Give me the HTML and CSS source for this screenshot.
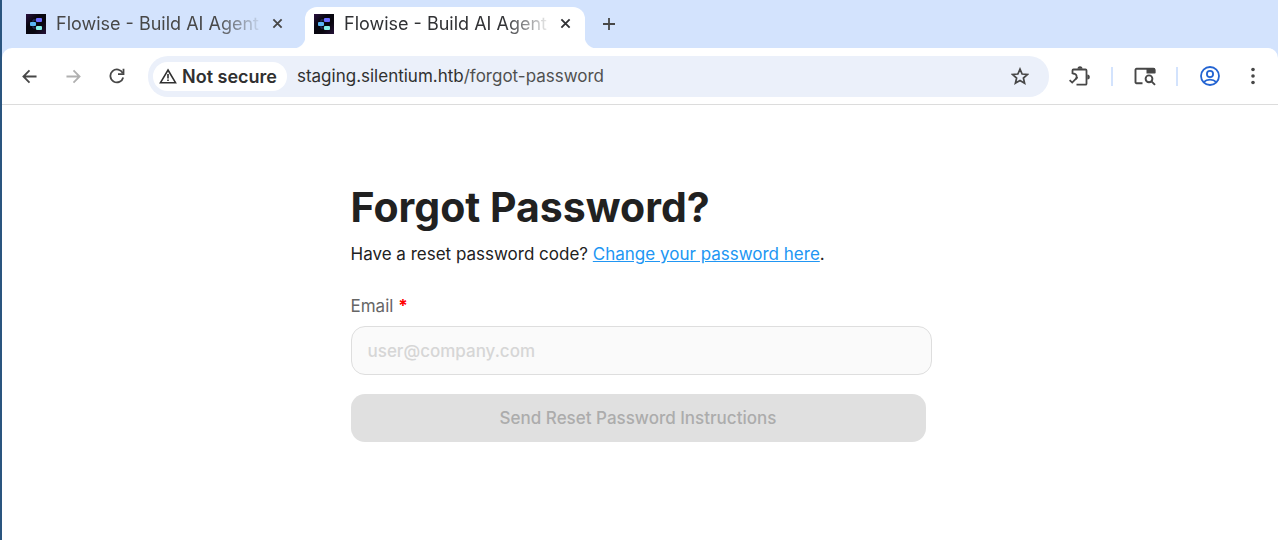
FILE: index.html
```html
<!DOCTYPE html>
<html lang="en">
<head>
<meta charset="utf-8">
<title>Flowise - Build AI Agents</title>
<link rel="stylesheet" href="styles.css">
</head>
<body>
<svg class="sprite" aria-hidden="true">
  <defs>
    <linearGradient id="logo-bg" x1="0" y1="0" x2="1" y2="1">
      <stop offset="0" stop-color="#2a1040"/>
      <stop offset=".35" stop-color="#07060f"/>
      <stop offset=".65" stop-color="#08060f"/>
      <stop offset="1" stop-color="#251238"/>
    </linearGradient>
  </defs>
  <symbol id="logo" viewBox="0 0 20 20">
    <rect width="20" height="20" fill="url(#logo-bg)"/>
    <path d="M7 10V6h5M7 10v4h5" fill="none" stroke="#27356b" stroke-width="1"/>
    <rect x="10" y="4" width="6" height="4" rx="1" fill="#6c6cff"/>
    <rect x="4" y="8" width="6" height="4" rx="1" fill="#5ab4f4"/>
    <rect x="10" y="12" width="6" height="4" rx="1" fill="#84eee8"/>
  </symbol>
  <symbol id="close" viewBox="0 0 12 12">
    <path d="M1.500 1.500l9 9M10.500 1.500l-9 9" fill="none" stroke="currentColor" stroke-width="2"/>
  </symbol>
</svg>
<div class="browser">
  <header>
    <nav class="tabs" aria-label="Tabs">
      <div class="tab">
        <svg class="logo"><use href="#logo"/></svg>
        <span class="tab-title">Flowise - Build AI Agents</span>
        <button class="tab-close" aria-label="Close tab"><svg><use href="#close"/></svg></button>
      </div>
      <div class="tab active">
        <svg class="logo"><use href="#logo"/></svg>
        <span class="tab-title">Flowise - Build AI Agents</span>
        <button class="tab-close" aria-label="Close tab"><svg><use href="#close"/></svg></button>
      </div>
      <button class="new-tab" aria-label="New tab"><svg width="14" height="14" viewBox="0 0 14 14" fill="none" stroke="currentColor" stroke-width="1.800"><path d="M7 1v12M1 7h12"/></svg></button>
    </nav>
    <div class="toolbar">
      <div class="nav-buttons">
        <button class="icon-button" aria-label="Back"><svg width="15" height="15" viewBox="0 0 16 16" fill="none" stroke="currentColor" stroke-width="1.900"><path d="M15.500 8H2M8 1.500L1.500 8 8 14.500"/></svg></button>
        <button class="icon-button" aria-label="Forward" disabled><svg width="15" height="15" viewBox="0 0 16 16" fill="none" stroke="currentColor" stroke-width="1.900"><path d="M.5 8H14M8 1.500L14.500 8 8 14.500"/></svg></button>
        <button class="icon-button" aria-label="Reload"><svg width="16" height="16" viewBox="0 0 16 16" fill="none" stroke="currentColor" stroke-width="1.800"><path d="M14.200 9.500A6.500 6.500 0 1 1 13.800 5.200"/><path d="M14.500.8v5.400H9"/></svg></button>
      </div>
      <div class="omnibox">
        <button class="chip"><svg width="18" height="16" viewBox="0 0 18 16" fill="none" stroke="currentColor" stroke-width="1.600"><path d="M9 2L16.500 14.700H1.500Z"/><path d="M9 6v4.500M9 11.500v1.600"/></svg>Not secure</button>
        <span class="url">staging.silentium.htb<span class="url-path">/forgot-password</span></span>
        <button class="icon-button star" aria-label="Bookmark this page"><svg width="18" height="18" viewBox="0 0 18 18" fill="none" stroke="currentColor" stroke-width="1.700"><path d="M9 2.100l2.100 4.900 5.300.5-4 3.500 1.200 5.200L9 13.400l-4.600 2.800L5.600 11l-4-3.500 5.300-.5z"/></svg></button>
      </div>
      <div class="actions">
        <button class="icon-button" aria-label="Extensions"><svg width="22" height="20" viewBox="0 0 22 20" fill="none" stroke="currentColor" stroke-width="1.800"><path d="M3.500 8V4.500a1 1 0 0 1 1-1h12a1 1 0 0 1 1 1v13.200a1 1 0 0 1-1 1H7.500M3.500 7.500C8 7.500 8.500 11 6.800 13.200"/><path d="M.6 14.100l2.600 2.500 5.300-5.500"/><path d="M8.500 2.800a2.500 2.500 0 0 1 5 0zM18.300 8.500a2.500 2.500 0 0 1 0 5z" fill="currentColor" stroke="none"/></svg></button>
        <span class="divider"></span>
        <button class="icon-button" aria-label="Search side panel"><svg width="22" height="20" viewBox="0 0 22 20" fill="none" stroke="currentColor" stroke-width="1.900"><path d="M8.500 17.200H2.500a1 1 0 0 1-1-1V3.800a1 1 0 0 1 1-1h17a1 1 0 0 1 1 1V7"/><path d="M12.500 2h7a1.800 1.800 0 0 1 1.800 1.800V7.500h-8.800z" fill="currentColor" stroke="none"/><circle cx="15" cy="12.800" r="3.400"/><path d="M17.500 15.300l3.500 3.500"/></svg></button>
        <span class="divider"></span>
        <button class="icon-button profile" aria-label="Profile"><svg width="20" height="20" viewBox="0 0 20 20" fill="none" stroke="currentColor" stroke-width="1.800"><circle cx="10" cy="10" r="9"/><circle cx="10" cy="8" r="3.100"/><path d="M3.700 16.200c3.300-3.500 9.300-3.500 12.600 0"/></svg></button>
        <button class="icon-button" aria-label="Menu"><svg width="4" height="18" viewBox="0 0 4 18" fill="currentColor"><circle cx="2" cy="2.500" r="1.800"/><circle cx="2" cy="9" r="1.800"/><circle cx="2" cy="15.500" r="1.800"/></svg></button>
      </div>
    </div>
  </header>
  <main class="page">
    <form class="form">
      <h1>Forgot Password?</h1>
      <p class="hint">Have a reset password code? <a href="#">Change your password here</a>.</p>
      <label for="email">Email <span class="required">*</span></label>
      <input id="email" type="email" placeholder="user@company.com" required>
      <button class="submit" type="submit" disabled>Send Reset Password Instructions</button>
    </form>
  </main>
</div>
</body>
</html>
```
FILE: styles.css
```css
* { box-sizing: border-box; }
body {
  margin: 0;
  background: #fff;
  color: #212121;
  font-family: Inter, "Liberation Sans", sans-serif;
}
button, input { font: inherit; }
button { border: 0; padding: 0; background: none; color: inherit; }
svg { display: block; }
.sprite { position: absolute; width: 0; height: 0; }
.browser {
  min-height: 100vh;
  border-left: 2px solid #2a557f;
}
header { background: #d3e3fd; }
.tabs {
  display: flex;
  gap: 8px;
  height: 48px;
  padding: 7px 0 0 15px;
}
.tab {
  position: relative;
  display: flex;
  align-items: center;
  width: 280px;
  height: 41px;
  padding: 0 14px 8px 9px;
  color: #474747;
  font-size: 18px;
}
.tab.active {
  background: #fff;
  color: #303134;
  border-radius: 12px 12px 0 0;
}
.tab.active::before,
.tab.active::after {
  content: "";
  position: absolute;
  bottom: 0;
  width: 12px;
  height: 12px;
}
.tab.active::before {
  right: 100%;
  background: radial-gradient(circle at 0 0, transparent 12px, #fff 13px);
}
.tab.active::after {
  left: 100%;
  background: radial-gradient(circle at 100% 0, transparent 12px, #fff 13px);
}
.logo { width: 20px; height: 20px; flex: none; }
.tab-title {
  flex: 1;
  margin: 0 12px 0 10px;
  overflow: hidden;
  white-space: nowrap;
  mask-image: linear-gradient(to right, #000 160px, transparent 208px);
}
.tab-close svg { width: 11px; height: 11px; }
.new-tab {
  display: flex;
  align-items: center;
  padding: 0 9px 8px;
  color: #474747;
}
.toolbar {
  display: flex;
  align-items: center;
  height: 57px;
  padding: 0 7px 0 9px;
  background: #fff;
  border-bottom: 1px solid #dcdcdc;
  border-radius: 10px 10px 0 0;
}
.nav-buttons { display: flex; gap: 8px; margin-right: 13px; }
.icon-button {
  display: flex;
  align-items: center;
  justify-content: center;
  width: 36px;
  height: 36px;
  flex: none;
  color: #474747;
}
.icon-button:disabled { color: #b0b0b0; }
.omnibox {
  flex: 1;
  display: flex;
  align-items: center;
  height: 41px;
  padding: 0 11px 0 5px;
  background: #ebf0fa;
  border-radius: 20px;
}
.chip {
  display: flex;
  align-items: center;
  gap: 5px;
  height: 29px;
  padding: 0 10px 0 6px;
  background: #fff;
  border-radius: 15px;
  font-size: 18px;
  font-weight: 600;
  color: #303030;
}
.url {
  flex: 1;
  margin-left: 10px;
  font-size: 17px;
  color: #303030;
}
.url-path { color: #505050; }
.actions { display: flex; align-items: center; margin-left: 13px; }
.divider {
  width: 2px;
  height: 19px;
  margin: 0 14px 0 13px;
  background: #d3e3fd;
}
.profile { margin-right: 7px; color: #2364d2; }
.page { display: flex; justify-content: center; padding: 77px 16px 40px 18px; }
.form {
  display: flex;
  flex-direction: column;
  width: 100%;
  max-width: 581px;
}
h1 {
  margin: 0;
  font-size: 41px;
  line-height: 50px;
  font-weight: 700;
}
.hint {
  margin: 10px 0 0;
  font-size: 17px;
  line-height: 24px;
}
.hint a { color: #2196f3; }
label {
  margin-top: 28px;
  font-size: 17px;
  line-height: 24px;
  color: #666;
}
.required { color: #f00; font-weight: 700; }
#email {
  height: 49px;
  margin-top: 8px;
  padding: 0 16px;
  border: 1px solid #dedede;
  border-radius: 14px;
  background: #fafafa;
  font-size: 17px;
  font-weight: 500;
  outline: 0;
}
#email::placeholder { color: #d6d6d6; opacity: 1; }
.submit {
  height: 48px;
  margin: 19px 6px 0 0;
  border-radius: 14px;
  background: #e0e0e0;
  color: #acacac;
  font-size: 17px;
  font-weight: 500;
}
```
